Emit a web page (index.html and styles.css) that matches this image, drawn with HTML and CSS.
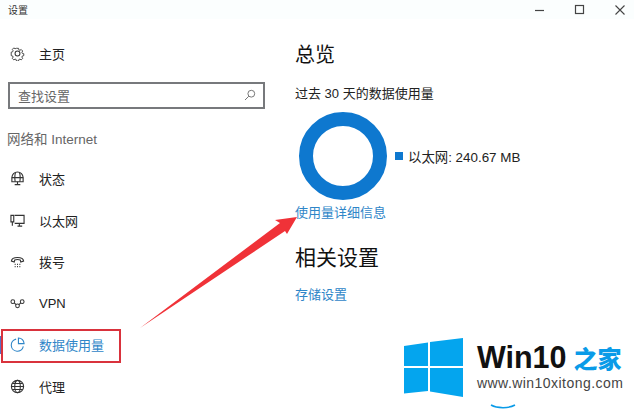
FILE: index.html
```html
<!DOCTYPE html>
<html lang="zh-CN">
<head>
    <meta charset="UTF-8">
    <title>设置</title>
    <link rel="stylesheet" href="styles.css">
</head>
<body>
    <div class="window">
        <div class="titlebar">
            <span class="app-title">设置</span>
            <div class="window-buttons">
                <svg width="12" height="12" viewBox="0 0 12 12"><path d="M1 6.5h9" stroke="#444" stroke-width="1.2"/></svg>
                <svg width="12" height="12" viewBox="0 0 12 12"><rect x="1.5" y="1.5" width="8" height="8" fill="none" stroke="#444" stroke-width="1.2"/></svg>
                <svg width="12" height="12" viewBox="0 0 12 12"><path d="M1.5 1.5l9 9M10.5 1.5l-9 9" stroke="#444" stroke-width="1.1"/></svg>
            </div>
        </div>
        <div class="content">
            <aside class="sidebar">
                <a class="nav-item">
                    <svg class="nav-icon" viewBox="0 0 16 16" fill="none" stroke="#333" stroke-width="1.1"><circle cx="8" cy="8" r="2.6"/><path d="M6.7 1.5h2.6l.4 1.9 1.3.6 1.7-1 1.8 1.9-1 1.6.5 1.3 1.9.5v2.4l-1.9.5-.5 1.3 1 1.6-1.8 1.9-1.7-1-1.3.6-.4 1.9H6.7l-.4-1.9-1.3-.6-1.7 1-1.8-1.9 1-1.6-.5-1.3-1.9-.5V6.3l1.9-.5.5-1.3-1-1.6 1.8-1.9 1.7 1 1.3-.6z" transform="translate(1.2 1.2) scale(.85)"/></svg>
                    <span>主页</span>
                </a>
                <div class="search">
                    <span>查找设置</span>
                    <svg width="12" height="12" viewBox="0 0 12 12" fill="none" stroke="#777"><circle cx="7.3" cy="4.7" r="3.4"/><path d="M4.8 7.2L1 11"/></svg>
                </div>
                <div class="nav-heading">网络和 Internet</div>
                <a class="nav-item">
                    <svg class="nav-icon" viewBox="0 0 16 16" fill="none" stroke="#333" stroke-width="1.2"><path d="M2 11.5V7a6 6 0 0 1 12 0v4.5z"/><path d="M2 7h12M6 1.5C5 4 5 8 5.500 11.500M10 1.500c1 2.500 1 6.500.5 10M8 11.500v3M5 14.500h6"/></svg>
                    <span>状态</span>
                </a>
                <a class="nav-item">
                    <svg class="nav-icon" viewBox="0 0 16 16" fill="none" stroke="#333" stroke-width="1.2"><path d="M5 2.500h10v8.500H5M1 2.500h3v7H1zM2.500 9.500v4M8 14h5M10 11v3"/></svg>
                    <span>以太网</span>
                </a>
                <a class="nav-item">
                    <svg class="nav-icon" viewBox="0 0 16 16" fill="none" stroke="#333" stroke-width="1.2"><path d="M1.500 7.500C2 2.500 14 2.500 14.500 7.500l-3 1-.5-2c-2-.8-4-.8-6 0l-.5 2z"/><path d="M5 11h1M7.500 11h1M10 11h1M5 13.500h1M7.500 13.500h1M10 13.500h1" stroke-width="1.400"/></svg>
                    <span>拨号</span>
                </a>
                <a class="nav-item">
                    <svg class="nav-icon" viewBox="0 0 16 16" fill="none" stroke="#333" stroke-width="1.1"><circle cx="3" cy="6" r="2"/><circle cx="8" cy="10.500" r="2"/><circle cx="13" cy="6" r="2"/><path d="M4.500 7.300L6.500 9.200M9.500 9.200L11.500 7.300"/></svg>
                    <span>VPN</span>
                </a>
                <a class="nav-item active">
                    <svg class="nav-icon" viewBox="0 0 16 16" fill="none" stroke="#2f86c8" stroke-width="1.2"><path d="M6.500 2.300a6.500 6.500 0 1 0 7.700 7.700"/><path d="M9 1a6 6 0 0 1 6 6H9z"/></svg>
                    <span>数据使用量</span>
                </a>
                <a class="nav-item">
                    <svg class="nav-icon" viewBox="0 0 16 16" fill="none" stroke="#333" stroke-width="1.2"><circle cx="8" cy="8" r="6.500"/><ellipse cx="8" cy="8" rx="3" ry="6.500"/><path d="M1.500 8h13M2.500 4.800h11M2.500 11.200h11"/></svg>
                    <span>代理</span>
                </a>
            </aside>
            <main class="main">
                <h1>总览</h1>
                <p class="usage-label">过去 30 天的数据使用量</p>
                <div class="usage-row">
                    <div class="donut"></div>
                    <div class="legend"><i></i><span>以太网: 240.67 MB</span></div>
                </div>
                <a class="link details-link">使用量详细信息</a>
                <h2>相关设置</h2>
                <a class="link">存储设置</a>
            </main>
        </div>
    </div>

    <!-- annotation drawn on top of the screenshot -->
    <div class="highlight"></div>
    <svg class="arrow" width="634" height="409" viewBox="0 0 634 409"><polygon points="140,328 280,223 275,220 297,217 287,234 285,231" fill="#f03238"/></svg>

    <div class="watermark">
        <svg class="win-logo" width="60" height="60" viewBox="0 0 60 60" fill="#04a5ee">
            <polygon points="0,8 24,4.500 24,28 0,28"/>
            <polygon points="26,4 59,0 59,28 26,28"/>
            <polygon points="0,30 24,30 24,53 0,55.500"/>
            <polygon points="26,30 59,30 59,59 26,53.500"/>
        </svg>
        <div class="win-name">Win10<b>之家</b></div>
        <div class="win-url">www.win10xitong.com</div>
        <svg class="win-arc" width="26" height="5" viewBox="0 0 26 5"><path d="M1 1c6 3.500 18 3.500 24 0" fill="none" stroke="#0a9be8" stroke-width="1.500"/></svg>
    </div>
</body>
</html>
```

FILE: styles.css
```css
* {
    box-sizing: border-box;
}
html, body {
    margin: 0;
    padding: 0;
    height: 100%;
}
body {
    position: relative;
    width: 634px;
    height: 409px;
    overflow: hidden;
    background: #fff;
    font-family: "Liberation Sans", "Noto Sans CJK SC", sans-serif;
    color: #222;
}
.window {
    height: 100%;
    display: flex;
    flex-direction: column;
}
.titlebar {
    height: 19px;
    flex: none;
    display: flex;
    justify-content: space-between;
    align-items: center;
    padding: 0 8px 0 8px;
    background: #fbfefe;
}
.app-title {
    font-size: 10px;
    color: #333;
}
.window-buttons {
    display: flex;
    gap: 28px;
}
.content {
    flex: 1;
    display: flex;
}
.sidebar {
    width: 295px;
    flex: none;
    padding-top: 14px;
}
.nav-item {
    position: relative;
    height: 41.500px;
    display: flex;
    align-items: center;
    gap: 14px;
    padding-left: 10px;
    font-size: 13px;
    color: #222;
}
.nav-icon {
    width: 15px;
    height: 15px;
    flex: none;
}
.nav-item.active {
    color: #2f86c8;
}
.nav-item.active::before {
    content: "";
    position: absolute;
    left: 0;
    top: 12px;
    width: 1px;
    height: 18px;
    background: #5a6fc0;
}
.search {
    width: 257px;
    height: 27px;
    margin: 7px 0 18px 8px;
    padding: 0 7px 0 8px;
    display: flex;
    justify-content: space-between;
    align-items: center;
    border: 2px solid #77797c;
    font-size: 13px;
    color: #666;
}
.nav-heading {
    height: 25px;
    padding-left: 7px;
    font-size: 13.500px;
    line-height: 25px;
    color: #666;
    margin-bottom: 6.500px;
}
.main {
    flex: 1;
    padding-top: 22px;
}
h1, h2 {
    margin: 0;
    font-weight: normal;
    color: #111;
}
h1 {
    font-size: 20px;
    line-height: 28px;
}
.usage-label {
    margin: 16px 0 0;
    font-size: 13px;
    line-height: 18px;
}
.usage-row {
    display: flex;
    align-items: center;
    gap: 8px;
    margin: 9px 0 0 4px;
}
.donut {
    width: 88px;
    height: 88px;
    border: 14px solid #0e78cf;
    border-radius: 50%;
}
.legend {
    display: flex;
    align-items: center;
    gap: 5px;
    font-size: 13.400px;
}
.legend i {
    width: 8px;
    height: 8px;
    background: #0e78cf;
}
.link {
    display: block;
    font-size: 13px;
    line-height: 18px;
    color: #2f86c8;
}
.details-link {
    margin-top: 4px;
}
h2 {
    margin: 21px 0 13px;
    font-size: 21px;
    line-height: 30px;
}
.highlight {
    position: absolute;
    left: 1px;
    top: 329px;
    width: 120px;
    height: 34px;
    border: 2px solid #d9323c;
}
.arrow {
    position: absolute;
    left: 0;
    top: 0;
}
.watermark {
    position: absolute;
    left: 0;
    top: 0;
    width: 634px;
    height: 409px;
}
.win-logo {
    position: absolute;
    left: 404px;
    top: 338px;
}
.win-name {
    position: absolute;
    left: 477px;
    top: 341px;
    font-size: 30.500px;
    line-height: 32px;
    font-weight: bold;
    color: #111;
    white-space: nowrap;
}
.win-name b {
    margin-left: 7px;
    font-size: 24px;
    color: #0a9be8;
}
.win-url {
    position: absolute;
    left: 477px;
    top: 376px;
    font-size: 14px;
    line-height: 14px;
    letter-spacing: .45px;
    color: #444;
    white-space: nowrap;
}
.win-arc {
    position: absolute;
    left: 490px;
    top: 404px;
}
```
